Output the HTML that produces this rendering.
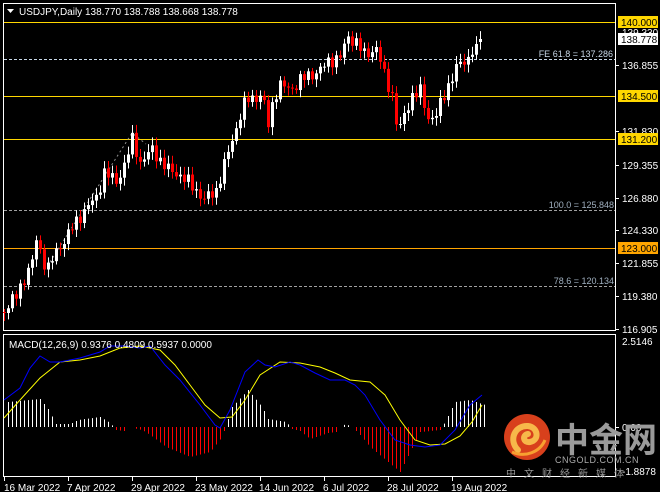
<!DOCTYPE html>
<html><head><meta charset="utf-8"><style>
html,body{margin:0;padding:0;background:#000;width:660px;height:492px;overflow:hidden}
svg{display:block;font-family:"Liberation Sans","Noto Sans CJK SC",sans-serif}
</style></head><body>
<svg id="s" width="660" height="492" viewBox="0 0 660 492" xmlns="http://www.w3.org/2000/svg">
<rect width="660" height="492" fill="#000"/>
<rect x="3.5" y="3.5" width="612" height="327" fill="none" stroke="#fff" stroke-width="1"/>
<rect x="3.5" y="334.5" width="612" height="142" fill="none" stroke="#fff" stroke-width="1"/>
<line x1="4" x2="615" y1="22.5" y2="22.5" stroke="#ffd700"/>
<line x1="4" x2="615" y1="96.5" y2="96.5" stroke="#ffd700"/>
<line x1="4" x2="615" y1="139.5" y2="139.5" stroke="#ffd700"/>
<line x1="4" x2="615" y1="248.5" y2="248.5" stroke="#ffa500"/>
<line x1="4" x2="615" y1="59.5" y2="59.5" stroke="#c8d8e8" stroke-dasharray="3,2"/>
<line x1="4" x2="615" y1="210.5" y2="210.5" stroke="#a0a0a0" stroke-dasharray="3,2"/>
<line x1="4" x2="615" y1="286.5" y2="286.5" stroke="#a0a0a0" stroke-dasharray="3,2"/>
<polyline points="50,262 132,133 146,144" fill="none" stroke="#909090" stroke-dasharray="2,3"/>
<text x="613" y="57" font-size="9" fill="#c8d8e8" text-anchor="end">FE 61.8 = 137.286</text>
<text x="614" y="208" font-size="9" fill="#a0b0c0" text-anchor="end">100.0 = 125.848</text>
<text x="614" y="284" font-size="9" fill="#a0b0c0" text-anchor="end">78.6 = 120.134</text>
<g id="candles"></g>
<g id="macd"></g>
<path d="M7 9 L14 9 L10.5 13 Z" fill="#fff"/>
<text x="19" y="15" font-size="10" fill="#fff">USDJPY,Daily  138.770 138.788 138.668 138.778</text>
<text x="9" y="348" font-size="10" fill="#fff">MACD(12,26,9) 0.9376 0.4809 0.5937 0.0000</text>
<g font-size="10" fill="#fff">
<g stroke="#fff"><line x1="616" x2="619" y1="65.5" y2="65.5"/><line x1="616" x2="619" y1="165.5" y2="165.5"/><line x1="616" x2="619" y1="198.5" y2="198.5"/><line x1="616" x2="619" y1="230.5" y2="230.5"/><line x1="616" x2="619" y1="263.5" y2="263.5"/><line x1="616" x2="619" y1="296.5" y2="296.5"/><line x1="616" x2="619" y1="329.5" y2="329.5"/><line x1="616" x2="619" y1="131.5" y2="131.5"/><line x1="616" x2="619" y1="427.5" y2="427.5"/></g>
<text x="622" y="36">139.330</text>
<text x="622" y="69">136.855</text>
<text x="622" y="135">131.830</text>
<text x="622" y="169">129.355</text>
<text x="622" y="202">126.880</text>
<text x="622" y="234">124.330</text>
<text x="622" y="267">121.855</text>
<text x="622" y="300">119.380</text>
<text x="622" y="333">116.905</text>
<text x="622" y="345">2.5146</text>
<text x="622" y="431">0.00</text>
<text x="622" y="475">-1.8878</text>
</g>
<rect x="618" y="16" width="40" height="12" fill="#ffd700"/><text x="621" y="26" font-size="10" fill="#000">140.000</text>
<rect x="618" y="33" width="40" height="12" fill="#fff"/><text x="621" y="43" font-size="10" fill="#000">138.778</text>
<rect x="618" y="90" width="40" height="12" fill="#ffd700"/><text x="621" y="100" font-size="10" fill="#000">134.500</text>
<rect x="618" y="133" width="40" height="12" fill="#ffd700"/><text x="621" y="143" font-size="10" fill="#000">131.200</text>
<rect x="618" y="242" width="40" height="12" fill="#ffa500"/><text x="621" y="252" font-size="10" fill="#000">123.000</text>
<g font-size="10" fill="#fff" stroke="none">
<text x="4" y="491">16 Mar 2022</text>
<text x="67" y="491">7 Apr 2022</text>
<text x="131" y="491">29 Apr 2022</text>
<text x="195" y="491">23 May 2022</text>
<text x="259" y="491">14 Jun 2022</text>
<text x="323" y="491">6 Jul 2022</text>
<text x="387" y="491">28 Jul 2022</text>
<text x="451" y="491">19 Aug 2022</text>
</g>
<g stroke="#fff"><line x1="4.5" x2="4.5" y1="477" y2="481"/><line x1="68.5" x2="68.5" y1="477" y2="481"/><line x1="132.5" x2="132.5" y1="477" y2="481"/><line x1="196.5" x2="196.5" y1="477" y2="481"/><line x1="260.5" x2="260.5" y1="477" y2="481"/><line x1="324.5" x2="324.5" y1="477" y2="481"/><line x1="388.5" x2="388.5" y1="477" y2="481"/><line x1="452.5" x2="452.5" y1="477" y2="481"/></g>
<circle cx="527" cy="437" r="23" fill="#d8401c"/>
<path d="M518 450 C508 440 515 425 528 426 C538 427 540 440 530 442 C523 443 522 435 528 434" fill="none" stroke="#f7b84a" stroke-width="6" stroke-linecap="round"/>
<path d="M512 452 C525 458 540 452 545 440" fill="none" stroke="#f7a030" stroke-width="3"/>
<text x="555" y="452" font-size="34" font-weight="bold" fill="#9a9a9a" font-family="'Noto Sans CJK SC',sans-serif">中金网</text>
<text x="555" y="463" font-size="9" fill="#aaa" letter-spacing="0.5">CNGOLD.COM.CN</text>
<text x="506" y="477" font-size="10" fill="#999" letter-spacing="8" font-family="'Noto Sans CJK SC',sans-serif">中文财经新媒体</text>
</svg>
<script>
(function(){
var NS="http://www.w3.org/2000/svg";
function interp(k,x){for(var i=0;i<k.length-1;i++){if(x<=k[i+1][0]){var t=(x-k[i][0])/(k[i+1][0]-k[i][0]);return k[i][1]+t*(k[i+1][1]-k[i][1]);}}return k[k.length-1][1];}
function el(p,t,a){var e=document.createElementNS(NS,t);for(var q in a)e.setAttribute(q,a[q]);p.appendChild(e);return e;}
var K=[[4,310],[16,296],[24,278],[32,262],[36,240],[44,262],[48,268],[56,252],[64,240],[72,228],[84,210],[96,198],[104,172],[116,182],[124,165],[132,140],[140,162],[152,150],[160,160],[168,170],[180,175],[196,190],[204,200],[216,190],[224,165],[232,140],[240,115],[246,100],[252,98],[262,95],[268,125],[274,95],[280,85],[290,90],[300,80],[310,75],[320,70],[330,60],[340,57],[348,37],[356,42],[364,55],[376,48],[384,75],[392,95],[398,135],[404,115],[412,95],[420,92],[428,118],[436,115],[448,85],[456,68],[468,58],[476,40],[482,40]];
var g=document.getElementById("candles");
var prev=312;
for(var i=0;i<=119;i++){
 var x=4+4*i; var c=interp(K,x)+Math.sin(i*2.7)*5+Math.cos(i*1.3)*3;
 var o=prev;
 if(i==118){c=44;}
 if(i==119){o=42;c=39;}
 var top=Math.min(o,c),bot=Math.max(o,c);
 if(bot-top<1)bot=top+1;
 var hi=top-3-Math.abs(Math.sin(i*3.1))*5, lo=bot+3+Math.abs(Math.cos(i*2.3))*5;
 var col=c>o?"#ff0000":"#ffffff";
 el(g,"line",{x1:x+0.5,x2:x+0.5,y1:hi,y2:lo,stroke:col});
 el(g,"rect",{x:x-1,y:top,width:3,height:bot-top,fill:col});
 prev=c;
}
var m=document.getElementById("macd");
var H=[[8,-25],[40,-28],[48,-18],[56,-3],[70,-3],[78,-7],[100,-10],[110,-4],[116,3],[124,4],[128,0],[142,3],[150,8],[166,20],[190,30],[210,25],[222,10],[226,-2],[232,-20],[248,-37],[262,-20],[268,-8],[286,-5],[292,2],[300,4],[310,12],[328,6],[336,5],[345,-3],[352,0],[360,8],[370,20],[400,45],[410,25],[420,5],[440,3],[445,-5],[455,-25],[470,-27],[485,-22]];
for(var i=1;i<=120;i++){var x=4+4*i;if(x>486)break;var h=interp(H,x);if(Math.abs(h)<1.5)continue;
 var col=h<0?"#ffffff":"#ff0000";
 el(m,"line",{x1:x+0.5,x2:x+0.5,y1:427,y2:427+h,stroke:col});}
var B=[[4,400],[20,388],[30,368],[40,356],[50,362],[60,362],[80,358],[100,352],[110,346],[125,346],[140,348],[150,346],[165,365],[180,380],[200,405],[215,425],[220,428],[230,410],[245,372],[258,360],[265,365],[275,367],[290,362],[300,365],[315,373],[330,380],[345,380],[355,385],[365,395],[380,420],[395,440],[410,445],[425,447],[440,445],[455,430],[470,405],[482,395]];
var Y=[[4,418],[20,400],[40,378],[60,362],[80,360],[100,356],[120,348],[140,346],[160,350],[175,365],[190,385],[205,405],[220,418],[232,417],[245,400],[260,375],[280,362],[300,363],[320,367],[335,373],[350,380],[370,382],[385,395],[400,420],[415,440],[430,445],[445,444],[460,436],[472,422],[482,405]];
function pl(a,c){var s=a.map(function(p){return p[0]+","+p[1]}).join(" ");el(m,"polyline",{points:s,fill:"none",stroke:c,"stroke-width":1});}
pl(Y,"#ffff00");pl(B,"#0000ff");
})();
</script>
</body></html>
